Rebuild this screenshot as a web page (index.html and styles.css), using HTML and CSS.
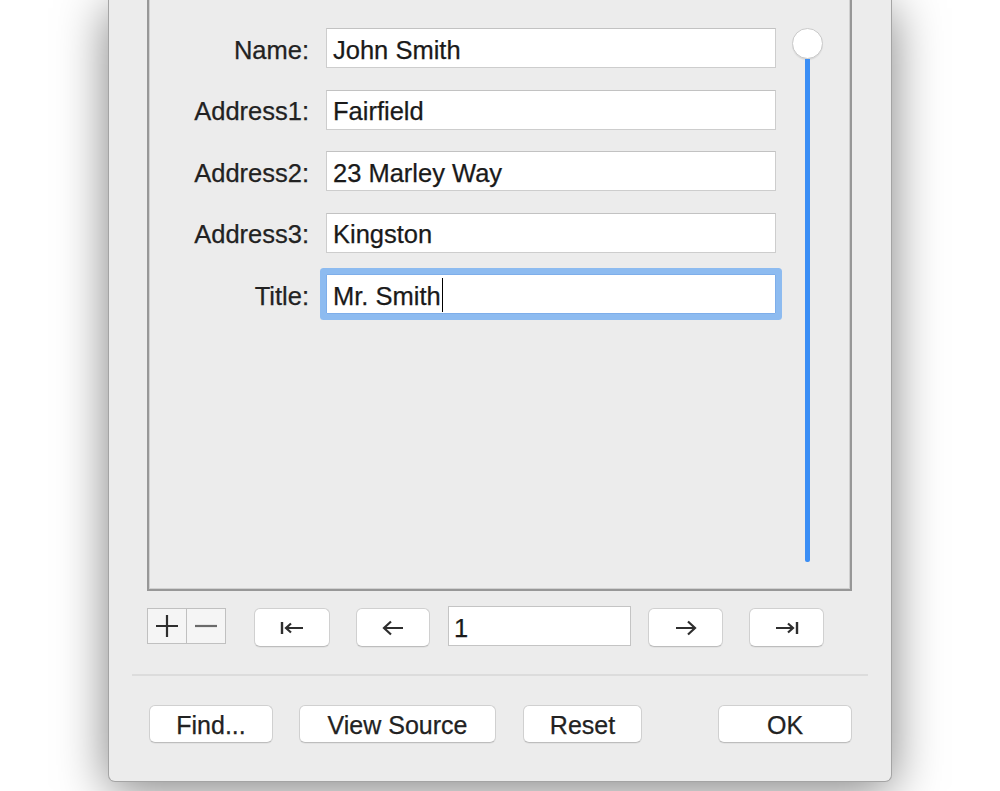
FILE: index.html
```html
<!DOCTYPE html>
<html>
<head>
<meta charset="utf-8">
<link rel="stylesheet" href="styles.css">
</head>
<body>
<div class="page">
  <div class="dialog">
    <div class="inner">
      <div class="form">
        <div class="row"><div class="label">Name:</div><div class="field">John Smith</div></div>
        <div class="row"><div class="label">Address1:</div><div class="field">Fairfield</div></div>
        <div class="row"><div class="label">Address2:</div><div class="field">23 Marley Way</div></div>
        <div class="row"><div class="label">Address3:</div><div class="field">Kingston</div></div>
        <div class="row"><div class="label">Title:</div><div class="field focused">Mr. Smith<span class="caret"></span></div></div>
      </div>
      <div class="slider">
        <div class="knob"></div>
        <div class="track"></div>
      </div>
    </div>

    <div class="nav">
      <div class="segmented">
        <div class="seg">
          <svg width="24" height="24" viewBox="0 0 24 24"><path d="M1 12H23M12 1V23" stroke="#2e2e2e" stroke-width="2.2" fill="none"/></svg>
        </div>
        <div class="seg seg-right">
          <svg width="24" height="24" viewBox="0 0 24 24"><path d="M1 12H23" stroke="#6a6a6a" stroke-width="2.2" fill="none"/></svg>
        </div>
      </div>
      <div class="btn nav-btn nb1">
        <svg width="24" height="14" viewBox="0 0 24 14"><path d="M2 1V13" stroke="#2e2e2e" stroke-width="2.4" fill="none"/><path d="M6 7H23M11 2.5L6 7L11 11.5" stroke="#2e2e2e" stroke-width="2.2" fill="none"/></svg>
      </div>
      <div class="btn nav-btn nb2">
        <svg width="22" height="16" viewBox="0 0 22 16"><path d="M2 8H21M9 1.5L2 8L9 14.5" stroke="#2e2e2e" stroke-width="2.2" fill="none"/></svg>
      </div>
      <div class="field record">1</div>
      <div class="btn nav-btn nb3">
        <svg width="22" height="16" viewBox="0 0 22 16"><path d="M1 8H20M13 1.5L20 8L13 14.5" stroke="#2e2e2e" stroke-width="2.2" fill="none"/></svg>
      </div>
      <div class="btn nav-btn nb4">
        <svg width="24" height="14" viewBox="0 0 24 14"><path d="M22 1V13" stroke="#2e2e2e" stroke-width="2.4" fill="none"/><path d="M1 7H18M13 2.5L18 7L13 11.5" stroke="#2e2e2e" stroke-width="2.2" fill="none"/></svg>
      </div>
    </div>

    <div class="separator"></div>

    <div class="actions">
      <div class="btn act find">Find...</div>
      <div class="btn act source">View Source</div>
      <div class="btn act reset">Reset</div>
      <div class="btn act ok">OK</div>
    </div>
  </div>
</div>
</body>
</html>
```

FILE: styles.css
```css
html, body {
  margin: 0;
  padding: 0;
  background: #ffffff;
  overflow: hidden;
}
body {
  font-family: "Liberation Sans", Arial, sans-serif;
  color: #1e1e1e;
  -webkit-text-stroke: 0.25px currentColor;
}
.page {
  width: 1000px;
  height: 791px;
  padding-left: 108px;
  box-sizing: border-box;
}
.dialog {
  width: 784px;
  height: 782px;
  box-sizing: border-box;
  background: #ececec;
  border: 1px solid #a4a4a4;
  border-top: 0;
  border-radius: 0 0 7px 7px;
  box-shadow: 0 8px 50px rgba(0, 0, 0, 0.5);
  padding-left: 23px;
  display: flex;
  flex-direction: column;
}
.inner {
  margin-left: 15px;
  width: 705px;
  height: 591px;
  box-sizing: border-box;
  border: 2px solid #979797;
  border-top: 0;
  box-shadow: inset 1px -1px 0 #d0d0d0, inset -1px 0 0 #d0d0d0;
  padding-top: 28px;
  display: flex;
  align-items: flex-start;
}
.form {
  display: flex;
  flex-direction: column;
  gap: 21.5px;
}
.row {
  display: flex;
  align-items: center;
  height: 40px;
}
.label {
  width: 160px;
  text-align: right;
  font-size: 25.5px;
  color: #222222;
  padding-right: 17px;
  padding-top: 4px;
  box-sizing: content-box;
}
.field {
  width: 450px;
  height: 40px;
  box-sizing: border-box;
  background: #ffffff;
  border: 1px solid #cdcdcd;
  border-top-color: #c2c2c2;
  padding-left: 6px;
  padding-top: 4px;
  font-size: 25.5px;
  color: #1a1a1a;
  display: flex;
  align-items: center;
}
.focused {
  border-color: #7eaeea;
  border-radius: 1px;
  box-shadow: 0 0 0 6px #8dbbf0;
}
.caret {
  display: inline-block;
  width: 1.5px;
  height: 34px;
  background: #000000;
  margin-left: 1px;
  margin-top: -3px;
}
.slider {
  margin-left: 16px;
  width: 31px;
  display: flex;
  flex-direction: column;
  align-items: center;
}
.knob {
  width: 31px;
  height: 31px;
  box-sizing: border-box;
  border-radius: 50%;
  background: #ffffff;
  border: 1px solid #cacaca;
  box-shadow: 0 1px 1px rgba(0, 0, 0, 0.08);
}
.track {
  width: 5px;
  height: 503px;
  background: #3b8ef5;
  border-radius: 0 0 2px 2px;
}
.nav {
  margin-left: 15px;
  margin-top: 15px;
  height: 41px;
  display: flex;
  align-items: flex-start;
}
.segmented {
  margin-top: 2px;
  width: 79px;
  height: 36px;
  box-sizing: border-box;
  border: 1px solid #c0c0c0;
  display: flex;
  background: #f5f5f5;
}
.seg {
  width: 39px;
  display: flex;
  align-items: center;
  justify-content: center;
}
.seg-right {
  border-left: 1px solid #c0c0c0;
}
.btn {
  box-sizing: border-box;
  background: #ffffff;
  border: 1px solid #d0d0d0;
  border-bottom-color: #bdbdbd;
  border-radius: 6px;
  box-shadow: 0 1px 0 rgba(0, 0, 0, 0.04);
  display: flex;
  align-items: center;
  justify-content: center;
  font-size: 25px;
  color: #222222;
}
.nav-btn {
  margin-top: 2px;
  height: 39px;
}
.nb1 { margin-left: 28px; width: 76px; }
.nb2 { margin-left: 26px; width: 74px; }
.record {
  margin-left: 18px;
  width: 183px;
  height: 40px;
  border-color: #c4c4c4;
  padding-left: 5px;
}
.nb3 { margin-left: 17px; width: 75px; }
.nb4 { margin-left: 26px; width: 75px; }
.separator {
  margin-top: 27px;
  width: 736px;
  height: 2px;
  background: #dcdcdc;
}
.actions {
  margin-top: 29px;
  margin-left: 17px;
  display: flex;
}
.act {
  height: 38px;
  padding-top: 2px;
}
.find { width: 124px; }
.source { margin-left: 26px; width: 197px; }
.reset { margin-left: 27px; width: 119px; }
.ok { margin-left: 76px; width: 134px; }
```
